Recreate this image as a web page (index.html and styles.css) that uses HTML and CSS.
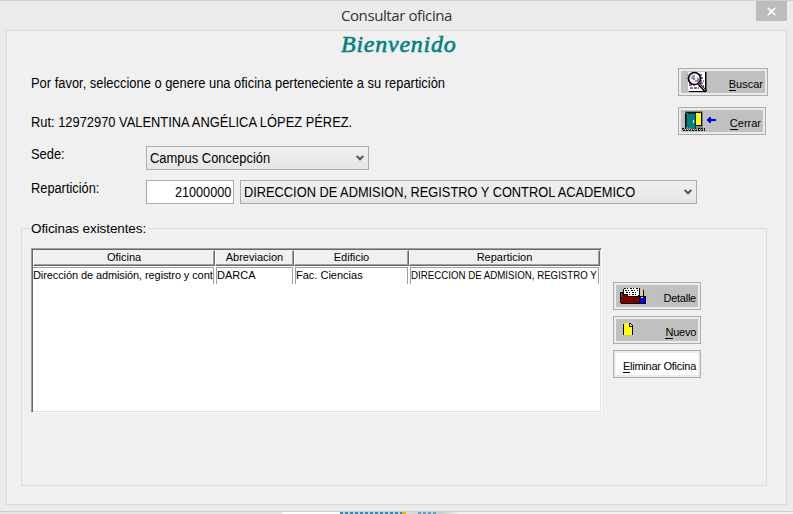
FILE: index.html
```
<!DOCTYPE html>
<html lang="es">
<head>
<meta charset="utf-8">
<title>Consultar oficina</title>
<link rel="stylesheet" href="styles.css">
</head>
<body>
<div class="window">
  <header class="titlebar">
    <h1>Consultar oficina</h1>
    <button class="close" aria-label="Cerrar ventana"><svg width="9" height="9" viewBox="0 0 9 9"><path d="M.8.8 8.2 8.2M8.2.8.8 8.2" stroke="#fff" stroke-width="1.7"/></svg></button>
  </header>
  <main class="panel">
    <h2>Bienvenido</h2>
    <div class="row intro">
      <p><span class="t-intro">Por favor, seleccione o genere una oficina perteneciente a su repartici&ograve;n</span></p>
      <button class="btn wide"><span class="face">
        <svg class="ico-find" width="23" height="22" viewBox="0 0 23 22">
          <path d="M3 1h17v19H3z" fill="#fff"/><path d="M20 1h1.500v20H4v-1h16z" fill="#000"/>
          <path d="M14 4h4M15 7h4M14 10h5M4 14h6M5 17h9M4 12h4M14 15h5M15 12h4M5 4h2" stroke="#5c3478" stroke-width="1.300" stroke-dasharray="3 1"/>
          <path d="M0 7h5M2 4h2M3 10h2" stroke="#888" stroke-dasharray="1 1"/>
          <circle cx="9.500" cy="7.500" r="6" fill="#f2f2f2" stroke="#000" stroke-width="1.700"/>
          <path d="M6 7h3v2M10 10h3V7M7 5h3" fill="none" stroke="#5b2f8c" stroke-width="1.200"/>
          <path d="m13.500 12.500 7.500 8" stroke="#000" stroke-width="3"/><path d="m14 12.500 6.500 7" stroke="#d8cdb8" stroke-width="1"/>
        </svg>
        <span class="cap"><u>B</u>uscar</span></span></button>
    </div>
    <div class="row rut">
      <p><span class="t-rut">Rut: 12972970 VALENTINA ANG&Eacute;LICA L&Oacute;PEZ P&Eacute;REZ.</span></p>
      <button class="btn"><span class="face">
        <svg class="ico-door" width="36" height="22" viewBox="0 0 36 22" shape-rendering="crispEdges">
          <path d="M4 1h18v18H4z" fill="#808080"/><path d="M14 3h6v12h-6z" fill="#ff0"/><path d="M5 2h15v1H5zM20 2h1v14h-1zM14 15h7v1h-7zM4 3h1v15H4z" fill="#000"/>
          <path d="M5 4l2-1h7v16h-2L5 17z" fill="#008080"/><path d="M14 3h1v16h-1zM5 4h1v13H5zM7 3h7v1H7z" fill="#003c3c"/><path d="M12 10h1v3h-1z" fill="#fff"/>
          <path d="M1 18.500h4M2 20.500h22M17 18.500h7" stroke="#000" stroke-dasharray="2 1"/><path d="M1 19.500h23" stroke="#444" stroke-dasharray="1 1"/>
          <path d="M26 10h9M28 8v4M29 7v6M27 9v2" stroke="#00f" stroke-width="2"/>
        </svg>
        <span class="cap"><u>C</u>errar</span></span></button>
    </div>
    <div class="row sede">
      <label><span class="t-sede">Sede:</span></label>
      <div class="select campus"><span>Campus Concepci&oacute;n</span><svg width="8" height="6" viewBox="0 0 8 6"><path d="M.7 1 4 4.300 7.300 1" fill="none" stroke="#555" stroke-width="2"/></svg></div>
    </div>
    <div class="row rep">
      <label><span class="t-rep">Repartici&oacute;n:</span></label>
      <div class="input"><span>21000000</span></div>
      <div class="select unit"><span>DIRECCION DE ADMISION, REGISTRO Y CONTROL ACADEMICO</span><svg width="8" height="6" viewBox="0 0 8 6"><path d="M.7 1 4 4.300 7.300 1" fill="none" stroke="#555" stroke-width="2"/></svg></div>
    </div>
    <section class="group">
      <h3><span>Oficinas existentes:</span></h3>
      <div class="content">
        <div class="grid">
          <div class="line head"><b>Oficina</b><b>Abreviacion</b><b>Edificio</b><b>Reparticion</b></div>
          <div class="line data">
            <div class="cell"><span class="c1">Direcci&oacute;n de admisi&oacute;n, registro y cont</span></div>
            <div class="cell"><span class="c2">DARCA</span></div>
            <div class="cell"><span class="c3">Fac. Ciencias</span></div>
            <div class="cell"><span class="c4">DIRECCION DE ADMISION, REGISTRO Y</span></div>
          </div>
        </div>
        <div class="actions">
          <button class="btn"><span class="face">
            <svg class="ico-files" width="28" height="18" viewBox="0 0 28 18" shape-rendering="crispEdges">
              <path d="M1 5h3v11H1z" fill="#000"/><path d="M2 6h1v5H2z" fill="#008080"/>
              <path d="M5 1h15v9H5z" fill="#fff"/><path d="M5 1.500h15M6 3.500h13M7 5.500h12M7 7.500h12" stroke="#000" stroke-dasharray="2 1 1 2"/><path d="M4 2h1v5H4zM20 1h1v8h-1z" fill="#000"/>
              <path d="M21 3h3v7h-3z" fill="#e8c89c"/><path d="M24 3h1v7h-1zM19 8h2v2h-2z" fill="#000"/>
              <path d="M3 7h5l2 3h11v7H2v-4z" fill="#800000"/><path d="M4 7h4v1H4zM8 8h1v1H8zM9 9h11v1H9zM2 16h19v1H2z" fill="#000"/>
              <path d="M20 9h7v8h-7z" fill="#000"/><path d="M21 11h5v5h-5z" fill="#00f"/><path d="M22 10h2v1h-2z" fill="#fff"/>
            </svg>
            <span class="cap">Detalle</span></span></button>
          <button class="btn"><span class="face">
            <svg class="ico-new" width="11" height="12" viewBox="0 0 11 12" shape-rendering="crispEdges"><path d="M1 0h6l3 3v9H1z" fill="#ff0"/><path d="M0 1h1v11H0zM9 3h1v9H9zM6 0h1v4H6zM6 3h4v1H6zM7 0h1v1H7zM8 1h1v1H8zM9 2h1v1H9z" fill="#000"/><path d="M7 1h1v2H7z" fill="#fff"/></svg>
            <span class="cap"><u>N</u>uevo</span></span></button>
          <button class="btn"><span class="face white"><span class="cap"><u>E</u>liminar Oficina</span></span></button>
        </div>
      </div>
    </section>
  </main>
</div>
<div class="behind"><span class="page"></span><span class="dots"></span><span class="gold"></span><span class="dots short"></span></div>
</body>
</html>
```
FILE: styles.css
```
* { box-sizing: border-box; }
body {
  margin: 0;
  width: 793px;
  height: 514px;
  overflow: hidden;
  background: #ebebeb;
  font-family: "Liberation Sans", Arial, sans-serif;
  font-size: 14px;
  color: #000;
}
h1, h2, h3, p { margin: 0; font-weight: normal; }
p, label, span { white-space: nowrap; }
button { font: inherit; color: inherit; padding: 0; margin: 0; border: 0; }

.window {
  height: 512px;
  padding: 0 6px 6px 6px;
  border-top: 1px solid #d0d0d0;
  border-bottom: 1px solid #cfcfcf;
  display: flex;
  flex-direction: column;
}
.titlebar { height: 29px; flex: none; display: flex; justify-content: flex-end; }
.titlebar h1 {
  flex: 1;
  padding-left: 31px;
  text-align: center;
  font: 15px/28px "Open Sans", "Noto Sans", sans-serif;
  letter-spacing: -0.4px;
  color: #333;
}
.close {
  width: 31px;
  height: 20px;
  background: #bcbcbc;
  display: flex;
  align-items: center;
  justify-content: center;
}
.panel {
  width: 781px;
  height: 475px;
  flex: none;
  border: 1px solid #d9d9d9;
  background: #f0f0f0;
}
h2 {
  height: 37px;
  padding-left: 334px;
  font: italic 24px/27px "Liberation Serif", serif;
  letter-spacing: 0.75px;
  -webkit-text-stroke: 0.6px #008080;
  color: #008080;
}
.row { display: flex; padding-left: 24px; }
.row p { width: 647px; line-height: 30px; }
.row label { width: 115px; flex: none; line-height: 17px; }
.intro { height: 39px; }
.rut { height: 39px; }
.sede { height: 34px; }
.rep { height: 40px; }

/* Condensed form text */
.row p span, .row label span, .select span, .input span, .cell span {
  display: inline-block;
  transform-origin: 0 50%;
}
.row .t-intro { transform: scaleX(.922); }
.row .t-rut { transform: scaleX(.92); }
.row .t-sede { transform: scaleX(.92); }
.row .t-rep { transform: scaleX(.915); }
.campus span { transform: scaleX(.925); }
.unit span { transform: scaleX(.915); }
.input span { transform: scaleX(.905); transform-origin: 100% 50%; }
.cell .c1 { letter-spacing: -0.1px; }
.cell .c4 { transform: scaleX(.882); }

.btn {
  width: 88px;
  height: 28px;
  flex: none;
  padding: 2px;
  border: 1px solid #acacac;
  background: #ebebeb;
  display: flex;
}
.btn.wide { width: 90px; }
.face {
  flex: 1;
  height: 22px;
  background: #c0c0c0;
  display: flex;
  align-items: flex-start;
  justify-content: flex-end;
}
.face.white { background: #fff; }
.face svg { margin-right: auto; flex: none; }
.cap { font-size: 11px; line-height: 14px; padding: 6px 2px 0 0; }
.actions .cap { letter-spacing: -0.25px; }
u { text-decoration: none; border-bottom: 1px solid #000; display: inline-block; line-height: 12px; }
.ico-find { margin-left: 4px; }
.ico-door { margin-left: 0; }
.ico-files { margin: 2px 0 0 3px; }
.ico-new { margin: 4px 0 0 7px; }

.select, .input { height: 24px; border: 1px solid #acacac; line-height: 24px; }
.select {
  display: flex;
  align-items: center;
  justify-content: space-between;
  padding: 0 4px 0 3px;
  background: linear-gradient(#f0f0f0, #e5e5e5);
}
.campus { width: 223px; }
.unit { width: 457px; margin-left: 6px; }
.input { width: 88px; padding-right: 2px; background: #fff; text-align: right; line-height: 22px; }

.group {
  width: 746px;
  height: 258px;
  margin: 8px 0 0 14px;
  border: 1px solid #dcdcdc;
}
.group h3 { height: 19px; margin-top: -10px; padding-left: 7px; font-size: 13.5px; line-height: 19px; letter-spacing: -0.1px; }
.group h3 span { display: inline-block; padding: 0 2px; background: #f0f0f0; }
.content { display: flex; gap: 11px; padding: 10px 0 0 9px; }
.grid {
  width: 571px;
  height: 165px;
  background: #fff;
  border: 1px solid;
  border-color: #a0a0a0 #fff #fff #a0a0a0;
  padding: 1px;
  box-shadow: inset 1px 1px #696969, inset -1px -1px #e3e3e3;
  font-size: 11px;
}
.line { display: grid; grid-template-columns: 182px 79px 115px 191px; }
.head b {
  height: 16px;
  font-weight: normal;
  text-align: center;
  line-height: 13px;
  background: #f0f0f0;
  border: 1px solid;
  border-color: #f0f0f0 #696969 #696969 #fff;
  box-shadow: inset -1px -1px #a0a0a0;
}
.data { padding-top: 1px; }
.cell {
  height: 17px;
  margin: 0 1px;
  border: 1px solid #a0a0a0;
  border-bottom: 0;
  line-height: 15px;
}
.cell:first-child { margin-left: 0; border-left: 0; }
.actions { padding-top: 34px; display: flex; flex-direction: column; gap: 6px; }

.behind { height: 2px; display: flex; background: linear-gradient(90deg, #e6e6e6 282px, #fff 283px, #fff 340px, #ccc 441px, #f0f0f0 460px); }
.page { width: 340px; }
.dots { width: 62px; background: repeating-linear-gradient(90deg, #2e8fb4 0 3px, #bdd8e2 3px 5px); }
.dots.short { width: 20px; margin-left: 12px; opacity: .7; }
.gold { width: 4px; background: #efb300; }
```
